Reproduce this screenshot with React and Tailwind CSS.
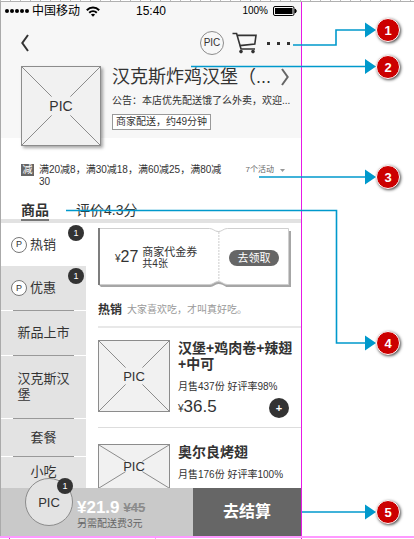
import React from "react";

function PicBox({ className, labelClass }) {
  return (
    <div className={`relative flex shrink-0 items-center justify-center border border-[#8c8c8c] bg-[#f1f1f1] ${className}`}>
      <svg
        className="absolute inset-0 h-full w-full"
        viewBox="0 0 100 100"
        preserveAspectRatio="none"
        fill="none"
        stroke="#8c8c8c"
        aria-hidden="true"
      >
        <path
          d="M0 0L38 38M62 62L100 100M100 0L62 38M38 62L0 100"
          vectorEffect="non-scaling-stroke"
        />
      </svg>
      <span className={`relative text-[#333] ${labelClass}`}>PIC</span>
    </div>
  );
}

function CountBadge({ className, children }) {
  return (
    <span
      className={`absolute flex h-4 w-4 items-center justify-center rounded-full bg-[#333] text-[9px] leading-none text-white ${className}`}
    >
      {children}
    </span>
  );
}

function StatusBar() {
  return (
    <div className="grid h-[18px] grid-cols-3 items-center pl-1 pr-1 text-xs leading-4 text-black">
      <div className="flex items-center gap-[3px] whitespace-nowrap">
        <svg width="24" height="6" viewBox="0 0 24 6" aria-hidden="true">
          <circle cx="2" cy="3" r="2" />
          <circle cx="7" cy="3" r="2" />
          <circle cx="12" cy="3" r="2" />
          <circle cx="17" cy="3" r="2" />
          <circle cx="22" cy="3" r="2" />
        </svg>
        <span>中国移动</span>
        <svg className="ml-[3px]" width="14" height="11" viewBox="0 0 14 11" fill="none" stroke="#000" strokeWidth="2" aria-hidden="true">
          <path d="M0.8 4.2C4.3 0.6 9.7 0.6 13.2 4.2" />
          <path d="M3.2 6.8C5.4 4.7 8.6 4.7 10.8 6.8" />
          <path d="M7 10.8L4.9 8.6C6 7.6 8 7.6 9.1 8.6Z" fill="#000" stroke="none" />
        </svg>
      </div>
      <div className="text-center">15:40</div>
      <div className="flex items-center justify-end gap-[5px] text-[10px]">
        <span>100%</span>
        <svg width="24" height="10" viewBox="0 0 24 10" aria-hidden="true">
          <rect x="0.5" y="0.5" width="20.5" height="9" rx="1.5" fill="none" stroke="#000" />
          <rect x="2" y="2" width="17.5" height="6" fill="#000" />
          <path d="M22 3C23.6 3.4 23.6 6.6 22 7Z" stroke="#000" />
        </svg>
      </div>
    </div>
  );
}

function NavBar() {
  return (
    <div className="flex h-[46px] items-center pl-5 pr-[11px]">
      <button type="button" aria-label="返回">
        <svg width="8" height="18" viewBox="0 0 8 18" fill="none" stroke="#333" strokeWidth="2" aria-hidden="true">
          <path d="M7 1L1.3 9L7 17" />
        </svg>
      </button>
      <div className="ml-auto flex items-center gap-2">
        <button
          type="button"
          className="flex h-6 w-6 items-center justify-center rounded-full border border-[#8c8c8c] text-[10px] leading-none text-[#333]"
        >
          PIC
        </button>
        <button type="button" aria-label="购物车">
          <svg width="25" height="22" viewBox="0 0 25 22" fill="none" stroke="#333" strokeWidth="1.6" aria-hidden="true">
            <path d="M0.5 1.5H4.6L9 17H23" />
            <path d="M5.2 3.4H24L22.8 12L7.8 13.6" />
            <circle cx="9" cy="19.6" r="1.8" fill="#333" stroke="none" />
            <circle cx="21" cy="19.6" r="1.8" fill="#333" stroke="none" />
          </svg>
        </button>
        <button type="button" aria-label="更多" className="flex gap-[7px] pl-0.5">
          <span className="h-[3px] w-[3px] bg-[#333]" />
          <span className="h-[3px] w-[3px] bg-[#333]" />
          <span className="h-[3px] w-[3px] bg-[#333]" />
        </button>
      </div>
    </div>
  );
}

function Shop() {
  return (
    <div className="-mb-2 flex gap-[11px] pl-5 pr-3">
      <PicBox className="h-20 w-20 shadow-[2px_2px_3px_rgba(0,0,0,0.35)]" labelClass="text-sm leading-none" />
      <div className="min-w-0 flex-1 whitespace-nowrap text-[#333]">
        <div className="flex items-center justify-between">
          <h1 className="text-lg leading-[22px]">汉克斯炸鸡汉堡（...</h1>
          <svg className="shrink-0" width="8" height="18" viewBox="0 0 8 18" fill="none" stroke="#666" strokeWidth="2" aria-hidden="true">
            <path d="M1 1L6.7 9L1 17" />
          </svg>
        </div>
        <p className="mt-1.5 text-[10px] leading-[14px]">公告：本店优先配送饿了么外卖，欢迎...</p>
        <span className="mt-[5px] inline-block border border-[#999] bg-white px-[3px] text-[10px] leading-[14px]">
          商家配送，约49分钟
        </span>
      </div>
    </div>
  );
}

function Promo() {
  return (
    <div className="flex items-start pl-5 pr-4 pt-[26px] text-[10px] leading-3 text-[#333]">
      <span className="mr-[5px] w-[13px] shrink-0 bg-[#666] text-center text-white">减</span>
      <p className="flex-1 pr-4">满20减8，满30减18，满60减25，满80减30</p>
      <button type="button" className="flex items-center gap-[6px] whitespace-nowrap text-[8px] leading-3 text-[#666]">
        7个活动
        <svg width="5" height="3" viewBox="0 0 5 3" fill="#999" aria-hidden="true">
          <path d="M0 0H5L2.5 3Z" />
        </svg>
      </button>
    </div>
  );
}

function Tabs() {
  return (
    <nav className="flex gap-[27px] border-b-4 border-[#e2e2e2] pl-5 pt-[13px] text-sm leading-[18px] text-[#333]">
      <button type="button" className="-mb-0.5 border-b-2 border-[#777] font-bold">
        商品
      </button>
      <button type="button" className="-mb-0.5 border-b-2 border-transparent">
        评价4.3分
      </button>
    </nav>
  );
}

function MarkedCategory({ label, className }) {
  return (
    <button type="button" className={`relative flex w-full items-center gap-[3px] pl-2.5 ${className}`}>
      <span className="flex h-4 w-4 items-center justify-center rounded-full border border-[#777] bg-white text-[9px] leading-none">
        P
      </span>
      {label}
      <CountBadge className="right-0.5 top-0.5">1</CountBadge>
    </button>
  );
}

function Category({ label, className }) {
  return (
    <>
      <div className="flex h-px justify-center bg-white">
        <span className="w-[61px] bg-[#999]" />
      </div>
      <button type="button" className={`flex w-full items-center justify-center ${className}`}>
        <span className="max-w-[52px] text-left">{label}</span>
      </button>
    </>
  );
}

function Sidebar() {
  return (
    <nav className="w-[85px] shrink-0 bg-[#e3e3e3] text-[13px] leading-4 text-[#333]">
      <MarkedCategory label="热销" className="h-[43px] bg-white" />
      <MarkedCategory label="优惠" className="h-11" />
      <Category label="新品上市" className="h-11" />
      <Category label="汉克斯汉堡" className="h-[62px]" />
      <Category label="套餐" className="h-[37px]" />
      <Category label="小吃" className="h-[30px]" />
    </nav>
  );
}

function Coupon() {
  return (
    <div className="relative mr-2.5 flex h-[59px] items-center pl-[17px] pr-3 text-[#333]">
      <svg className="absolute inset-0 h-full w-full" viewBox="0 0 194 59" preserveAspectRatio="none" aria-hidden="true">
        <path d="M3 3H194V59H129C126 57 124 56 121 56S116 59 113 59H3L0 56V3Z" fill="#a6a6a6" />
        <path
          d="M0.5 0.5H112C116 0.5 117 3.5 121 3.5S126 0.5 130 0.5H191.5V56.5H130C126 56.5 125 53.5 121 53.5S116 56.5 112 56.5H0.5Z"
          fill="#fff"
          stroke="#cfcfcf"
        />
        <path d="M121.5 4V53" stroke="#ccc" strokeDasharray="2 1" />
        <path d="M1 0V57" stroke="#7d7d7d" strokeWidth="2" />
      </svg>
      <div className="relative flex items-baseline text-[10px] leading-5">
        ¥<span className="text-base leading-5">27</span>
      </div>
      <div className="relative ml-1 whitespace-nowrap text-[10px] leading-3">
        <div className="text-[11px]">商家代金券</div>
        <div>共4张</div>
      </div>
      <button type="button" className="relative ml-auto h-4 w-[50px] rounded-full bg-[#666] text-[11px] leading-4 text-white">
        去领取
      </button>
    </div>
  );
}

function Product({ name, stats, price, picClass }) {
  return (
    <article className="flex gap-2 border-b border-[#ddd] pb-[9px] pt-4 text-[#333] first:pt-3">
      <PicBox className={picClass} labelClass="text-[13px] leading-none" />
      <div className="min-w-0 flex-1">
        <h3 className="text-sm font-bold leading-4">{name}</h3>
        <p className="mt-2 text-[10px] leading-[14px]">{stats}</p>
        {price && (
          <div className="mt-1 flex h-5 items-center justify-between pr-3">
            <span className="flex items-baseline text-[10px] leading-5">
              ¥<span className="text-[17px]">{price}</span>
            </span>
            <button
              type="button"
              aria-label="加入购物车"
              className="flex h-5 w-5 items-center justify-center rounded-full bg-[#333] text-[11px] font-bold leading-none text-white"
            >
              +
            </button>
          </div>
        )}
      </div>
    </article>
  );
}

function Menu() {
  return (
    <section className="min-w-0 flex-1 pl-3 pt-[5px]">
      <Coupon />
      <div className="mt-[13px] flex items-center gap-[5px] whitespace-nowrap border-b-2 border-[#e8e8e8] pb-1.5 leading-5">
        <h2 className="text-xs font-bold leading-5 text-[#333]">热销</h2>
        <span className="text-[10px] leading-5 text-[#999]">大家喜欢吃，才叫真好吃。</span>
      </div>
      <div>
        <Product name="汉堡+鸡肉卷+辣翅+中可" stats="月售437份 好评率98%" price="36.5" picClass="h-[72px] w-[72px]" />
        <Product name="奥尔良烤翅" stats="月售176份 好评率100%" picClass="h-[45px] w-[72px]" />
      </div>
    </section>
  );
}

function CheckoutBar() {
  return (
    <div className="relative flex h-12 shrink-0 bg-[#c9c9c9]">
      <button
        type="button"
        className="absolute -top-2.5 left-6 flex h-12 w-12 items-center justify-center rounded-full border border-[#8c8c8c] bg-[#e3e3e3] text-[13px] leading-none text-[#333]"
      >
        PIC
        <CountBadge className="-right-px -top-px">1</CountBadge>
      </button>
      <div className="flex-1 whitespace-nowrap pl-[76px] pt-2.5">
        <div className="flex items-center gap-1 font-bold leading-5">
          <span className="text-[17px] text-white">¥21.9</span>
          <del className="text-[13px] text-[#8c8c8c]">¥45</del>
        </div>
        <div className="text-[10px] leading-3 text-[#666]">另需配送费3元</div>
      </div>
      <button type="button" className="w-[108px] bg-[#666] text-base font-bold text-white">
        去结算
      </button>
    </div>
  );
}

function Marker({ className, children }) {
  return (
    <span
      className={`absolute right-3.5 flex h-6 w-6 items-center justify-center rounded-full border border-white bg-[#c00] text-[13px] font-bold leading-none text-white shadow-[1px_1px_3px_rgba(0,0,0,0.7)] ${className}`}
    >
      {children}
    </span>
  );
}

function Annotations() {
  return (
    <aside className="pointer-events-none absolute inset-0 overflow-hidden">
      <svg className="absolute right-0 top-0" width="414" height="360" viewBox="0 0 414 360" aria-hidden="true">
        <g fill="none" stroke="#0099cc" strokeWidth="1.6">
          <path d="M293 45H336V30H366" />
          <path d="M191 66.5H366" />
          <path d="M259 177H366" />
          <path d="M66 210.5H336.5V343H366" />
        </g>
        <path d="M365 22.5L376 30L365 37.5ZM365 59L376 66.5L365 74ZM365 169.5L376 177L365 184.5ZM365 335.5L376 343L365 350.5Z" fill="#0099cc" />
      </svg>
      <svg className="absolute bottom-0 right-0" width="112" height="40" viewBox="0 0 112 40" aria-hidden="true">
        <path d="M0 13H64" stroke="#0099cc" strokeWidth="1.6" />
        <path d="M63 5.5L74 13L63 20.5Z" fill="#0099cc" />
      </svg>
      <Marker className="top-[18px]">1</Marker>
      <Marker className="top-[55px]">2</Marker>
      <Marker className="top-[165px]">3</Marker>
      <Marker className="top-[331px]">4</Marker>
      <Marker className="bottom-[15px]">5</Marker>
    </aside>
  );
}

export default function App() {
  return (
    <div className="relative flex h-screen flex-col overflow-hidden bg-white font-['Liberation_Sans','Noto_Sans_CJK_SC',sans-serif]">
      <div className="h-0.5 shrink-0 border-b border-[#b0b0b0] bg-[repeating-linear-gradient(to_right,#bbb_0_1px,transparent_1px_10px)]" />
      <main className="mr-28 flex min-h-0 flex-1 flex-col border-l border-r border-l-[#aaa] border-r-[#e619e6]">
        <header className="bg-[#f7f7f7]">
          <StatusBar />
          <NavBar />
          <Shop />
        </header>
        <Promo />
        <Tabs />
        <div className="flex min-h-0 flex-1 overflow-hidden">
          <Sidebar />
          <Menu />
        </div>
        <CheckoutBar />
      </main>
      <div className="h-[3px] shrink-0 border-t-2 border-[#ff99ff]">
        <div className="mr-28 flex h-px justify-between pl-[9px]">
          <span className="w-px bg-[#e619e6]" />
          <span className="w-px bg-[#ff99ff]" />
          <span className="w-px bg-[#e619e6]" />
        </div>
      </div>
      <Annotations />
    </div>
  );
}
